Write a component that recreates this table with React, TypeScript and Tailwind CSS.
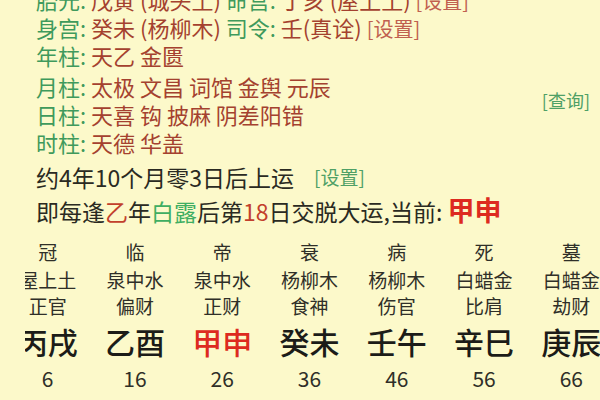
import React from "react";

const G = "text-[#3f9a5c]";
const R = "text-[#a4412f]";

const cols = [
  { a: "冠", b: "屋上土", c: "正官", d: "丙戌", e: "6" },
  { a: "临", b: "泉中水", c: "偏财", d: "乙酉", e: "16" },
  { a: "帝", b: "泉中水", c: "正财", d: "甲申", e: "26", red: true },
  { a: "衰", b: "杨柳木", c: "食神", d: "癸未", e: "36" },
  { a: "病", b: "杨柳木", c: "伤官", d: "壬午", e: "46" },
  { a: "死", b: "白蜡金", c: "比肩", d: "辛巳", e: "56" },
  { a: "墓", b: "白蜡金", c: "劫财", d: "庚辰", e: "66" },
];

function Line({ label, children, cls = "" }: { label: string; children: React.ReactNode; cls?: string }) {
  return (
    <div className={`h-[28px] leading-[28px] text-[22px] whitespace-nowrap ${cls}`}>
      <span className={G}>{label}: </span>
      {children}
    </div>
  );
}

export default function App() {
  return (
    <div
      className="w-[600px] h-[400px] overflow-hidden bg-[#fcf9ca] text-[#2a2a22]"
      style={{ fontFamily: '"Noto Sans CJK SC", "Noto Sans", sans-serif' }}
    >
      <div className="pl-[36px]">
        <Line label="胎元" cls="-mt-[15px]">
          <span className={R}>戊寅 (城头土) </span>
          <span className={G}>命宫: </span>
          <span className={R}>丁亥 (屋上土) </span>
          <span className="text-[20px] text-[#c0604f]">[设置]</span>
        </Line>
        <Line label="身宫">
          <span className={R}>癸未 (杨柳木) </span>
          <span className={G}>司令: </span>
          <span className={R}>壬(真诠) </span>
          <span className="text-[20px] text-[#c0604f]">[设置]</span>
        </Line>
        <Line label="年柱">
          <span className={R}>天乙 金匮</span>
        </Line>
        <div className="flex justify-between items-start mt-[3px]">
          <div>
            <Line label="月柱">
              <span className={R}>太极 文昌 词馆 金舆 元辰</span>
            </Line>
            <Line label="日柱">
              <span className={R}>天喜 钩 披麻 阴差阳错</span>
            </Line>
            <Line label="时柱">
              <span className={R}>天德 华盖</span>
            </Line>
          </div>
          <div className="mt-[16px] mr-[10px] text-[18px] leading-[24px] text-[#4fa066]">[查询]</div>
        </div>
        <div className="mt-[5px] h-[32px] leading-[32px] text-[23px] whitespace-nowrap flex items-center">
          <span>约4年10个月零3日后上运</span>
          <span className="ml-[20px] text-[19px] text-[#4fa066]">[设置]</span>
        </div>
        <div className="h-[34px] leading-[34px] text-[23px] whitespace-nowrap">
          <span>即每逢</span>
          <span className="text-[#c2402c]">乙</span>
          <span>年</span>
          <span className="text-[#3fae62]">白露</span>
          <span>后第</span>
          <span className="text-[#c2402c]">18</span>
          <span>日交脱大运,当前: </span>
          <span className="text-[27px] font-bold text-[#dd2a20]">甲申</span>
        </div>
      </div>
      <div className="ml-[25px] mt-[11px] overflow-hidden">
        <div className="-ml-[21px] w-[611px] grid grid-cols-7 text-center text-[#2f2f28]">
          {cols.map((c, i) => (
            <div key={i} className="flex flex-col items-center whitespace-nowrap">
              <div className="h-[28px] leading-[28px] text-[19px]">{c.a}</div>
              <div className="h-[28px] leading-[28px] text-[19px]">{c.b}</div>
              <div className="h-[24px] leading-[24px] text-[19px]">{c.c}</div>
              <div
                className={`h-[46px] leading-[46px] text-[30px] font-medium ${
                  c.red ? "text-[#dd2a20]" : "text-[#1c1c18]"
                }`}
              >
                {c.d}
              </div>
              <div className="h-[28px] leading-[28px] text-[21px]">{c.e}</div>
            </div>
          ))}
        </div>
      </div>
    </div>
  );
}
